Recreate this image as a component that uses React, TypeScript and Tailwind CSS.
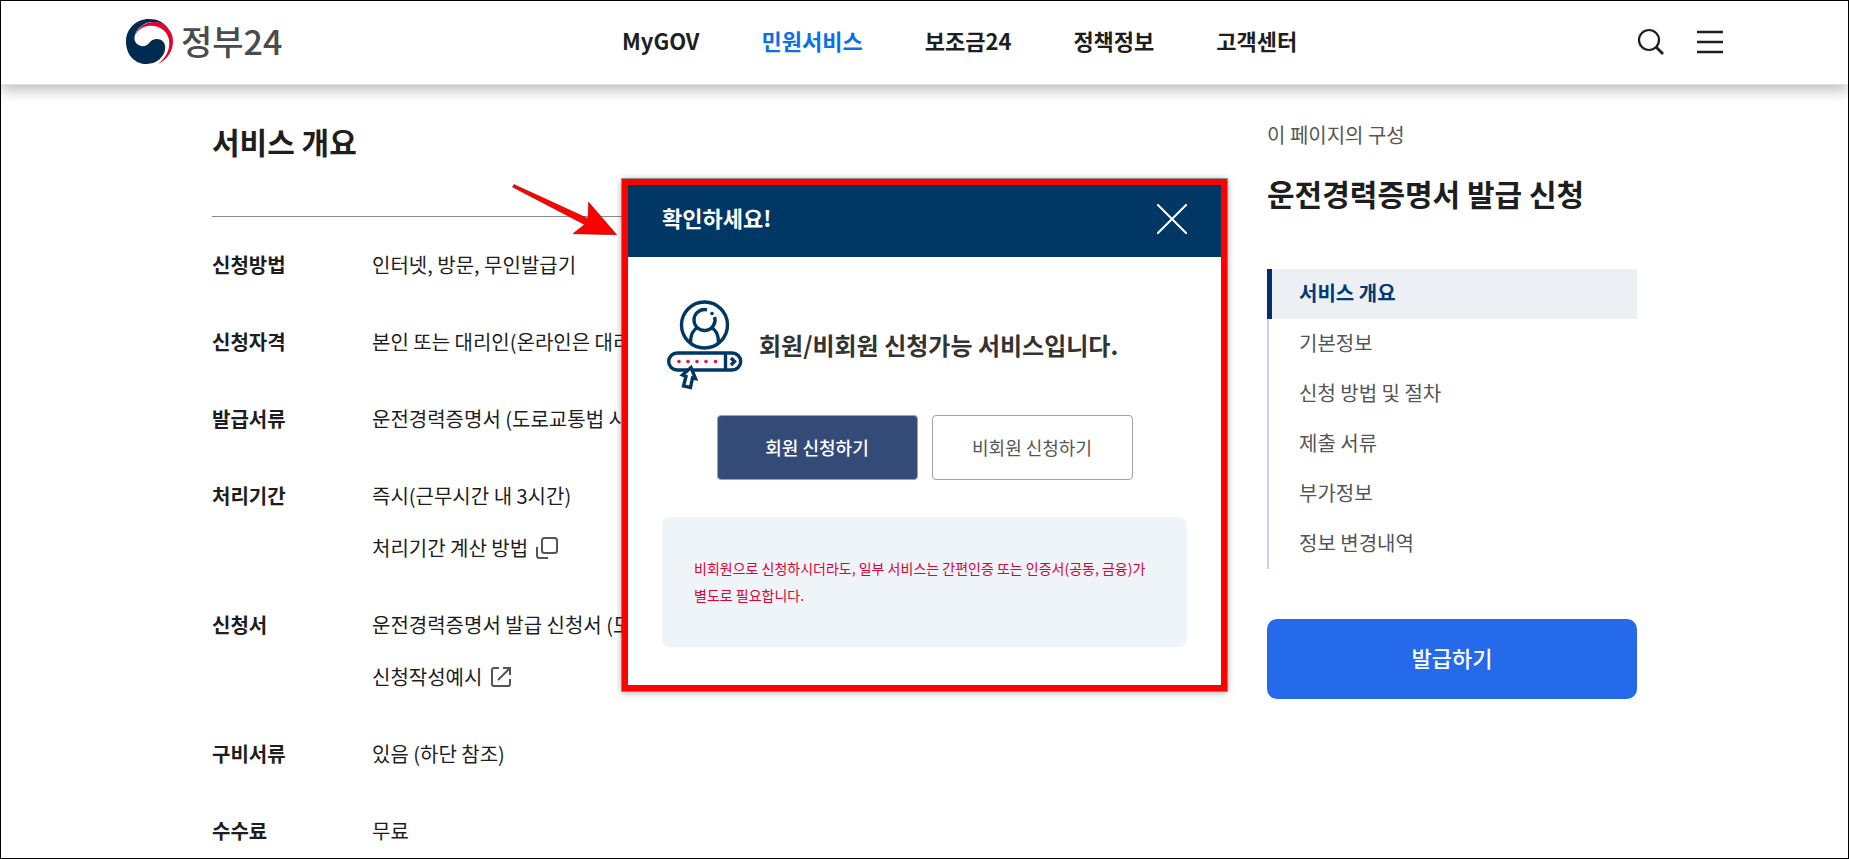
import * as React from "react";
import classNames from "clsx";

interface INavItem {
    title: string;
    active?: boolean;
}

interface IInfoRow {
    title: string;
    text: string;
    link?: string;
    icon?: React.ReactNode;
}

const LogoIcon = () => (
    <svg width="47" height="45" viewBox="12 12 139 135" preserveAspectRatio="none" aria-hidden="true">
        <path
            d="M37 70 C38 44 62 21 92 21 C112 21 126 28 134 37 C124 22 104 12 80 12 C41 12 12 42 12 80 C12 118 37 147 73 147 C104 147 128 125 128 97 C128 82 117 72 103 72 C86 72 83 84 74 90 C58 100 37 88 37 70 Z"
            fill="#002b50"
        />
        <path
            d="M38 63 C44 38 70 21 94 21 C112 21 127 27 135 38 C146 49 151 64 151 79 C151 107 136 133 107 147 C127 130 140 111 140 84 C140 53 116 32 85 32 C62 32 45 45 38 63 Z"
            fill="#e8002d"
        />
    </svg>
);

const SearchIcon = () => (
    <svg width="28" height="28" viewBox="0 0 28 28" fill="none" stroke="#1e1e20" strokeWidth="2.2" aria-hidden="true">
        <circle cx="12" cy="12" r="10" />
        <path d="M19 19 L26 26" strokeWidth="2.8" />
    </svg>
);

const MenuIcon = () => (
    <svg width="26" height="24" viewBox="0 0 26 24" fill="none" stroke="#1e1e20" strokeWidth="2.4" aria-hidden="true">
        <path d="M0 2 H26 M0 12 H26 M0 22 H26" />
    </svg>
);

const LayerIcon = () => (
    <svg width="22" height="22" viewBox="0 0 22 22" fill="none" stroke="#555" strokeWidth="2" aria-hidden="true">
        <rect x="6" y="1" width="15" height="15" rx="2.5" />
        <path d="M1 10 V18.5 Q1 21 3.5 21 H12" />
    </svg>
);

const NewWindowIcon = () => (
    <svg width="22" height="22" viewBox="0 0 22 22" fill="none" stroke="#555" strokeWidth="2" aria-hidden="true">
        <path d="M9 2 H4 Q2 2 2 4 V18 Q2 20 4 20 H18 Q20 20 20 18 V13" />
        <path d="M8 14 L20 2 M13 2 H20 V9" />
    </svg>
);

const MemberIcon = () => (
    <svg width="85" height="90" viewBox="-5 0 85 90" fill="none" stroke="#003764" strokeWidth="3.4" aria-hidden="true">
        <circle cx="37.5" cy="25" r="23" />
        <path d="M40 9.8 A10.5 10.5 0 1 0 47.6 17" />
        <circle cx="45" cy="13.5" r="1.8" fill="#003764" stroke="none" />
        <path d="M23.5 43 C23.5 34 26 29.5 31 27.5 M51.5 43 C51.5 34 49 29.5 44 27.5" />
        <rect x="1.7" y="53" width="72" height="17" rx="8.5" />
        <path d="M58.5 53 V70" />
        <path d="M64 58 L67.5 61.5 L64 65" />
        <g fill="#e8113f" stroke="none">
            <circle cx="12" cy="61.5" r="1.8" />
            <circle cx="21" cy="61.5" r="1.8" />
            <circle cx="30" cy="61.5" r="1.8" />
            <circle cx="39" cy="61.5" r="1.8" />
            <circle cx="48.5" cy="61.5" r="1.8" />
        </g>
        <path d="M24 67.5 L15.5 75 L19 76.5 L16.5 86 L23.5 87.5 L25.5 78 L28.5 78.5 Z" fill="#fff" />
    </svg>
);

const navItems: INavItem[] = [
    { title: "MyGOV" },
    { title: "민원서비스", active: true },
    { title: "보조금24" },
    { title: "정책정보" },
    { title: "고객센터" },
];

const infoRows: IInfoRow[] = [
    { title: "신청방법", text: "인터넷, 방문, 무인발급기" },
    { title: "신청자격", text: "본인 또는 대리인(온라인은 대리신청 불가)" },
    { title: "발급서류", text: "운전경력증명서 (도로교통법 시행규칙)" },
    { title: "처리기간", text: "즉시(근무시간 내 3시간)", link: "처리기간 계산 방법", icon: <LayerIcon /> },
    { title: "신청서", text: "운전경력증명서 발급 신청서 (도로교통법)", link: "신청작성예시", icon: <NewWindowIcon /> },
    { title: "구비서류", text: "있음 (하단 참조)" },
    { title: "수수료", text: "무료" },
];

const sections = ["서비스 개요", "기본정보", "신청 방법 및 절차", "제출 서류", "부가정보", "정보 변경내역"];

const Header = () => (
    <header className="relative flex h-[84px] items-center justify-between border-b border-[#dfe3ec] bg-white px-[125px] pb-[2px] shadow-[0_6px_12px_rgba(0,0,0,0.24)]">
        <a href="#" className="flex items-center gap-2">
            <LogoIcon />
            <span className="pb-[2px] text-[34px] leading-[44px] font-medium text-[#4b4b4d]">정부24</span>
        </a>
        <nav className="flex gap-[62px] pb-1">
            {navItems.map(({ title, active }) => (
                <a
                    key={title}
                    href="#"
                    className={classNames("text-[22px] leading-8 font-bold", active ? "text-[#0b6fe8]" : "text-[#1e1e20]")}
                >
                    {title}
                </a>
            ))}
        </nav>
        <div className="flex items-center gap-8">
            <button aria-label="검색">
                <SearchIcon />
            </button>
            <button aria-label="전체메뉴">
                <MenuIcon />
            </button>
        </div>
    </header>
);

const InfoRow = ({ title, text, link, icon }: IInfoRow) => (
    <div className="flex leading-8">
        <dt className="w-40 shrink-0 font-bold">{title}</dt>
        <dd className="flex flex-col items-start gap-5 whitespace-nowrap">
            <span>{text}</span>
            {link && (
                <a href="#" className="flex items-center gap-2">
                    {link}
                    {icon}
                </a>
            )}
        </dd>
    </div>
);

const Sidebar = () => (
    <aside className="w-[370px] shrink-0">
        <p className="leading-[30px] text-[#555]">이 페이지의 구성</p>
        <h2 className="mt-5 text-[30px] leading-[46px] font-bold">운전경력증명서 발급 신청</h2>
        <ul className="mt-[53px]">
            {sections.map((section, i) => (
                <li key={section}>
                    <a
                        href="#"
                        className={classNames(
                            "flex h-[50px] items-center pb-[2px]",
                            i === 0
                                ? "border-l-[5px] border-[#003070] bg-[#eceff4] pl-[27px] font-bold text-[#003a75]"
                                : "border-l-2 border-[#c6d3e3] pl-[30px] text-[#555]"
                        )}
                    >
                        {section}
                    </a>
                </li>
            ))}
        </ul>
        <button className="mt-[50px] h-20 w-full rounded-[10px] bg-[#256aeb] pb-1 text-[22px] font-medium text-white">
            발급하기
        </button>
    </aside>
);

const Arrow = () => (
    <svg
        className="absolute -top-2 right-full"
        width="120"
        height="64"
        viewBox="508 177 120 64"
        fill="#ff0000"
        stroke="#8a1010"
        strokeWidth="0.6"
        aria-hidden="true"
    >
        <path d="M514 184.5 L588 218.5 L588.5 202 L616.7 234.7 L573 233.7 L584.5 224.5 L512.5 187 Z" />
    </svg>
);

const ConfirmDialog = () => (
    <div className="pointer-events-none absolute inset-0 flex items-start justify-center pt-[178px]">
        <div
            role="dialog"
            aria-labelledby="dialog-title"
            className="pointer-events-auto relative w-[605px] border-[6px] border-[#ff0000] bg-white shadow-[0_0_0_1px_rgba(90,90,90,0.6),0_1px_7px_rgba(0,0,0,0.4)]"
        >
            <Arrow />
            <div className="flex h-[72px] items-center justify-between bg-[#003764] px-[34px] pb-1 shadow-[inset_0_1px_0_#2b1f3c]">
                <h2 id="dialog-title" className="pb-1 text-[22px] font-bold text-white">
                    확인하세요!
                </h2>
                <button aria-label="닫기">
                    <svg width="30" height="30" viewBox="0 0 30 30" stroke="#fff" strokeWidth="2" aria-hidden="true">
                        <path d="M0 0 L30 30 M30 0 L0 30" />
                    </svg>
                </button>
            </div>
            <div className="px-[34px] pt-[43px] pb-[38px]">
                <div className="flex items-center gap-3">
                    <MemberIcon />
                    <p className="text-2xl font-bold text-[#333]">회원/비회원 신청가능 서비스입니다.</p>
                </div>
                <div className="mt-[25px] flex justify-center gap-[14px] text-lg">
                    <button className="h-[65px] w-[201px] rounded-[4px] border border-[#a0a0a0] bg-[#344b78] pb-[2px] font-medium text-white">
                        회원 신청하기
                    </button>
                    <button className="h-[65px] w-[201px] rounded-[4px] border border-[#a0a0a0] bg-white pb-[2px] text-[#555]">
                        비회원 신청하기
                    </button>
                </div>
                <p className="mt-[37px] rounded-lg bg-[#eff4f9] px-8 py-[38px] text-sm leading-[27px] text-[#e00034]">
                    비회원으로 신청하시더라도, 일부 서비스는 간편인증 또는 인증서(공동, 금융)가
                    <br />
                    별도로 필요합니다.
                </p>
            </div>
        </div>
    </div>
);

export default function App() {
    return (
        <div className="relative h-screen overflow-hidden border border-black bg-white font-['Noto_Sans_CJK_KR',sans-serif] text-xl text-[#1e1e20]">
            <Header />
            <main className="mx-auto flex max-w-[1425px] gap-20 pt-[35px]">
                <section className="min-w-0 flex-1">
                    <h1 className="text-[30px] leading-[42px] font-bold">서비스 개요</h1>
                    <dl className="mt-[54px] flex flex-col gap-[45px] border-t border-[#8a8a8a] pt-8">
                        {infoRows.map((row) => (
                            <InfoRow key={row.title} {...row} />
                        ))}
                    </dl>
                </section>
                <Sidebar />
            </main>
            <ConfirmDialog />
        </div>
    );
}
